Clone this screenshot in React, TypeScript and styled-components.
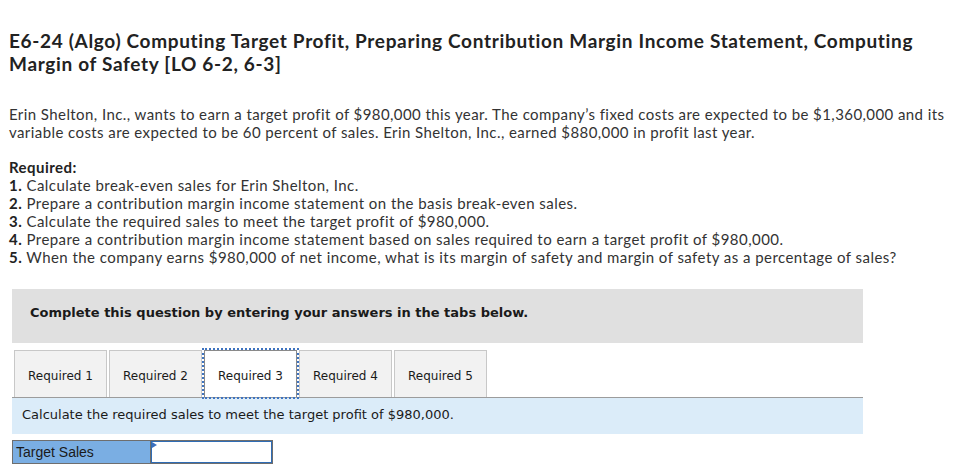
import React, { useState } from 'react';
import styled, { createGlobalStyle } from 'styled-components';

const GlobalStyle = createGlobalStyle`
  html, body {
    margin: 0;
    padding: 0;
    background: #ffffff;
  }
  body {
    font-family: Lato, "Open Sans", sans-serif;
    color: #333333;
  }
`;

const tabs = ['Required 1', 'Required 2', 'Required 3', 'Required 4', 'Required 5'];

const requirements = [
  'Calculate break-even sales for Erin Shelton, Inc.',
  'Prepare a contribution margin income statement on the basis break-even sales.',
  'Calculate the required sales to meet the target profit of $980,000.',
  'Prepare a contribution margin income statement based on sales required to earn a target profit of $980,000.',
  'When the company earns $980,000 of net income, what is its margin of safety and margin of safety as a percentage of sales?',
];

export default function App() {
  const [active, setActive] = useState(2);
  const [sales, setSales] = useState('');

  return (
    <Page>
      <GlobalStyle />
      <Title>
        E6-24 (Algo) Computing Target Profit, Preparing Contribution Margin Income Statement, Computing
        <br />
        Margin of Safety [LO 6-2, 6-3]
      </Title>
      <Intro>
        Erin Shelton, Inc., wants to earn a target profit of $980,000 this year. The company’s fixed costs are expected
        to be $1,360,000 and its
        <br />
        variable costs are expected to be 60 percent of sales. Erin Shelton, Inc., earned $880,000 in profit last year.
      </Intro>
      <Required>
        <ReqHead>Required:</ReqHead>
        {requirements.map((r, i) => (
          <ReqLine key={i}>
            <b>{i + 1}.</b> {r}
          </ReqLine>
        ))}
      </Required>
      <Notice>Complete this question by entering your answers in the tabs below.</Notice>
      <TabRow>
        {tabs.map((t, i) => (
          <Tab key={t} active={i === active} onClick={() => setActive(i)}>
            {t}
          </Tab>
        ))}
      </TabRow>
      <Instruction>Calculate the required sales to meet the target profit of $980,000.</Instruction>
      <AnswerRow>
        <AnswerLabel>Target Sales</AnswerLabel>
        <AnswerCell>
          <Marker />
          <AnswerInput value={sales} onChange={(e) => setSales(e.target.value)} />
        </AnswerCell>
      </AnswerRow>
    </Page>
  );
}

const Page = styled.div`
  padding: 29px 0 0 9px;
  width: 960px;
`;

const Title = styled.h1`
  margin: 0;
  font-family: Lato, "Open Sans", sans-serif;
  font-size: 19px;
  line-height: 23px;
  font-weight: 700;
  color: #222222;
  letter-spacing: 0.67px;
  white-space: nowrap;
`;

const Intro = styled.p`
  margin: 30px 0 0;
  font-size: 15px;
  line-height: 18px;
  color: #333333;
  white-space: nowrap;
  letter-spacing: 0.42px;
`;

const Required = styled.div`
  margin-top: 17px;
  font-size: 15px;
  line-height: 18px;
  letter-spacing: 0.45px;
  white-space: nowrap;
`;

const ReqHead = styled.div`
  font-weight: 700;
  color: #222222;
`;

const ReqLine = styled.div`
  color: #333333;

  b {
    font-weight: 700;
    color: #222222;
  }
`;

const Notice = styled.div`
  margin: 23px 0 0 3px;
  width: 851px;
  height: 54px;
  box-sizing: border-box;
  padding: 16px 0 0 18px;
  background: #e0e0e0;
  font-family: "DejaVu Sans", Verdana, sans-serif;
  font-size: 13px;
  font-weight: 700;
  line-height: 16px;
  color: #1a1a1a;
`;

const TabRow = styled.div`
  display: flex;
  gap: 2px;
  margin: 7px 0 0 5px;
`;

const Tab = styled.div<{ active: boolean }>`
  width: 93px;
  height: 47px;
  box-sizing: border-box;
  display: flex;
  align-items: center;
  justify-content: center;
  border: 1px solid ${(p) => (p.active ? '#8a8a8a' : '#c8c8c8')};
  border-bottom: none;
  background: ${(p) => (p.active ? '#ffffff' : '#f2f2f2')};
  outline: ${(p) => (p.active ? '2px dotted #3f74c0' : 'none')};
  font-family: "DejaVu Sans", Verdana, sans-serif;
  font-size: 12px;
  color: #1a1a1a;
  padding-top: 3px;
  cursor: pointer;
  position: relative;
  z-index: ${(p) => (p.active ? 1 : 0)};
`;

const Instruction = styled.div`
  margin-left: 3px;
  width: 851px;
  height: 37px;
  box-sizing: border-box;
  border-top: 1px solid #9c9c9c;
  background: #dbecf9;
  padding: 9px 0 0 10px;
  font-family: "DejaVu Sans", Verdana, sans-serif;
  font-size: 13px;
  line-height: 16px;
  color: #1a1a1a;
`;

const AnswerRow = styled.div`
  display: flex;
  margin: 6px 0 0 3px;
  width: 261px;
  height: 24px;
  box-sizing: border-box;
  border: 1px solid #6e6e6e;
  background: #6e6e6e;
  gap: 1px;
`;

const AnswerLabel = styled.div`
  flex: 0 0 137px;
  background: #7aaee3;
  font-family: "Liberation Sans", Arial, sans-serif;
  font-size: 14px;
  line-height: 22px;
  padding-left: 3px;
  box-sizing: border-box;
  color: #1a1a1a;
  white-space: nowrap;
`;

const AnswerCell = styled.div`
  position: relative;
  flex: 1;
  min-width: 0;
  display: flex;
`;

const AnswerInput = styled.input`
  flex: 1;
  width: 100%;
  min-width: 0;
  margin: 0;
  padding: 0 3px;
  box-sizing: border-box;
  border: 1px solid #2f6cb5;
  background: #ffffff;
  font-family: "Liberation Sans", Arial, sans-serif;
  font-size: 13px;
  outline: none;
`;

const Marker = styled.span`
  position: absolute;
  left: 1px;
  top: 1px;
  width: 0;
  height: 0;
  border-top: 3px solid transparent;
  border-bottom: 3px solid transparent;
  border-left: 5px solid #3a6fbe;
`;
